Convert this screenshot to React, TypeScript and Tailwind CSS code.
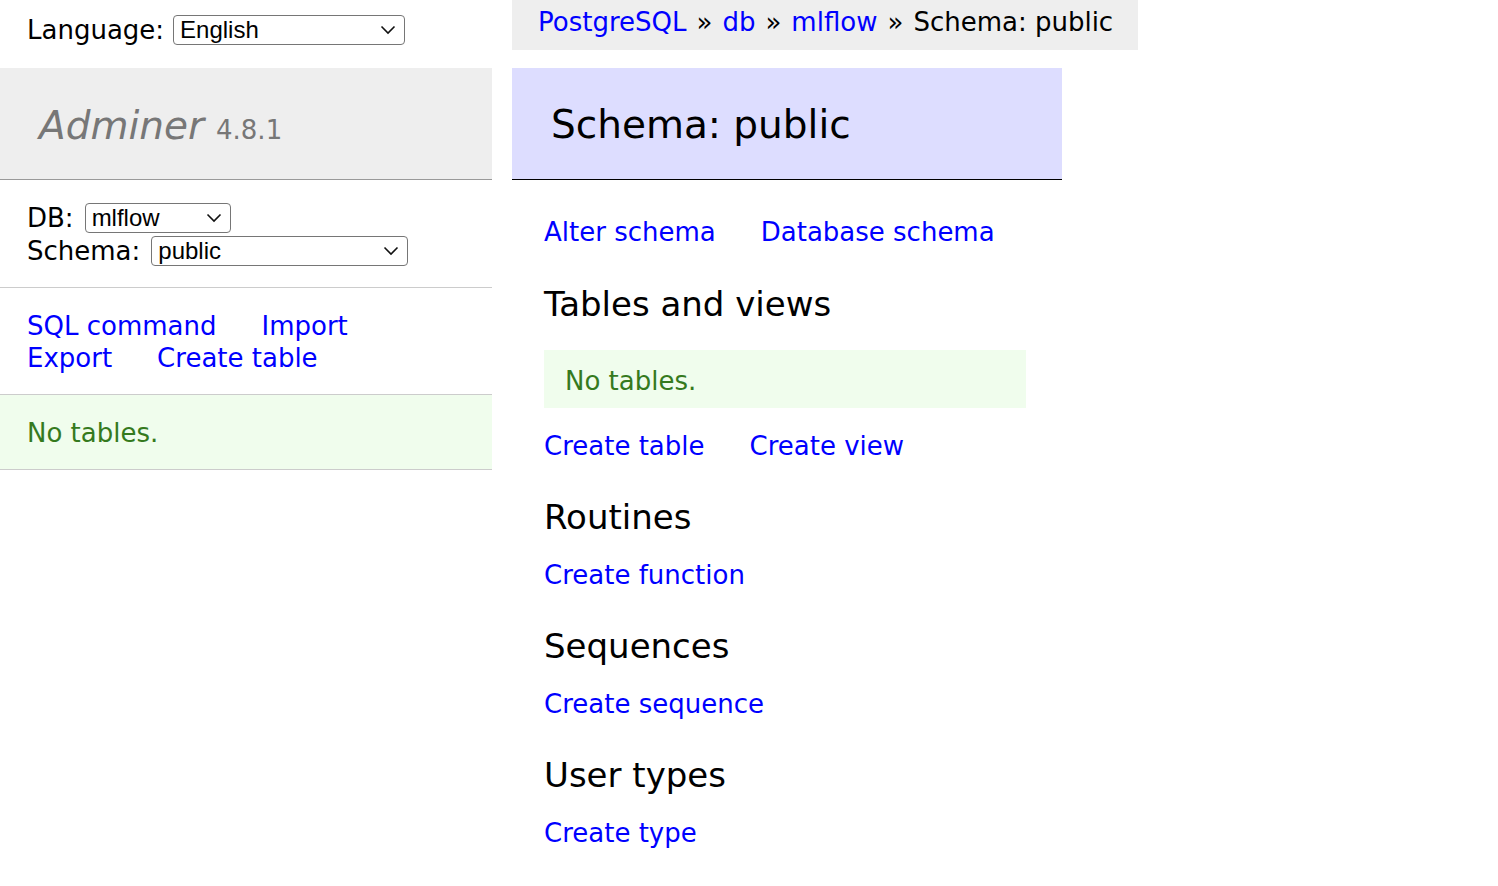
import React from 'react';

const verdana = "font-['DejaVu_Sans','Verdana',sans-serif]";

function Chevron() {
  return (
    <svg width="16" height="10" viewBox="0 0 16 10" className="shrink-0">
      <path d="M1.5 1.5 L8 8 L14.5 1.5" fill="none" stroke="#111" strokeWidth="1.6" />
    </svg>
  );
}

function FakeSelect({ value, width }: { value: string; width: string }) {
  return (
    <span
      className={`inline-flex h-[30px] items-center justify-between rounded-[4px] border border-[#767676] bg-white pl-[6px] pr-[8px] align-middle font-['Liberation_Sans',Arial,sans-serif] text-[24px] leading-none text-black ${width}`}
    >
      <span>{value}</span>
      <Chevron />
    </span>
  );
}

function LinkRow({ links, className = '' }: { links: string[]; className?: string }) {
  return (
    <div className={`flex h-[32px] items-center gap-[45px] whitespace-nowrap leading-[32px] ${className}`}>
      {links.map((l) => (
        <a key={l} href="#" className="text-[#0000ff]">
          {l}
        </a>
      ))}
    </div>
  );
}

function H3({ children, className = '' }: { children: React.ReactNode; className?: string }) {
  return <h3 className={`h-[42px] text-[34px] leading-[42px] font-normal text-black ${className}`}>{children}</h3>;
}

export default function App() {
  return (
    <div className={`flex min-h-[886px] bg-white text-[26px] leading-[32px] text-black ${verdana}`}>
      {/* left menu */}
      <div className="w-[492px] shrink-0">
        <div className="flex h-[68px] items-center gap-[9px] pb-[8px] pl-[27px]">
          <span>Language:</span>
          <FakeSelect value="English" width="w-[232px]" />
        </div>

        <h1 className="flex h-[112px] items-baseline border-b border-[#999] bg-[#eee] pl-[39px] pt-[34px] font-normal text-[#777]">
          <a href="#" className="text-[39px] italic leading-[48px] text-[#777]">
            Adminer
          </a>
          <span className="ml-[12px] text-[26px] leading-[48px]">4.8.1</span>
        </h1>

        <div className="flex h-[108px] flex-col border-b border-[#ccc] pl-[27px] pt-[21px]">
          <div className="flex h-[33px] items-center gap-[11px]">
            <span>DB:</span>
            <FakeSelect value="mlflow" width="w-[146px]" />
          </div>
          <div className="flex h-[33px] items-center gap-[11px]">
            <span>Schema:</span>
            <FakeSelect value="public" width="w-[257px]" />
          </div>
        </div>

        <div className="flex h-[107px] flex-col border-b border-[#ccc] pl-[27px] pt-[22px]">
          <LinkRow links={['SQL command', 'Import']} />
          <LinkRow links={['Export', 'Create table']} />
        </div>

        <div className="flex h-[75px] items-center border-b border-[#ccc] bg-[#f0fded] pl-[27px] pt-[2px] text-[#357a1e]">
          No tables.
        </div>
      </div>

      {/* content */}
      <div className="ml-[20px] flex flex-col items-start">
        <div className="flex h-[50px] items-center whitespace-nowrap bg-[#eee] pl-[26px] pr-[25px] pb-[6px]">
          <a href="#" className="text-[#0000ff]">PostgreSQL</a>
          <span className="mx-[10px]">»</span>
          <a href="#" className="text-[#0000ff]">db</a>
          <span className="mx-[10px]">»</span>
          <a href="#" className="text-[#0000ff]">mlflow</a>
          <span className="mx-[10px]">»</span>
          <span>Schema: public</span>
        </div>

        <h2 className="mt-[18px] flex h-[112px] w-[550px] items-center border-b border-black bg-[#ddf] pl-[39px] pt-[2px] text-[39px] font-normal leading-[48px] text-black">
          Schema: public
        </h2>

        <div className="flex w-[518px] flex-col pl-[32px]">
          <LinkRow links={['Alter schema', 'Database schema']} className="mt-[36px]" />

          <H3 className="mt-[35px]">Tables and views</H3>
          <div className="mt-[25px] flex h-[58px] w-[482px] items-center bg-[#f0fded] pl-[21px] pt-[3px] text-[#357a1e]">
            No tables.
          </div>
          <LinkRow links={['Create table', 'Create view']} className="mt-[22px]" />

          <H3 className="mt-[34px]">Routines</H3>
          <LinkRow links={['Create function']} className="mt-[21px]" />

          <H3 className="mt-[34px]">Sequences</H3>
          <LinkRow links={['Create sequence']} className="mt-[21px]" />

          <H3 className="mt-[34px]">User types</H3>
          <LinkRow links={['Create type']} className="mt-[21px]" />
        </div>
      </div>
    </div>
  );
}
